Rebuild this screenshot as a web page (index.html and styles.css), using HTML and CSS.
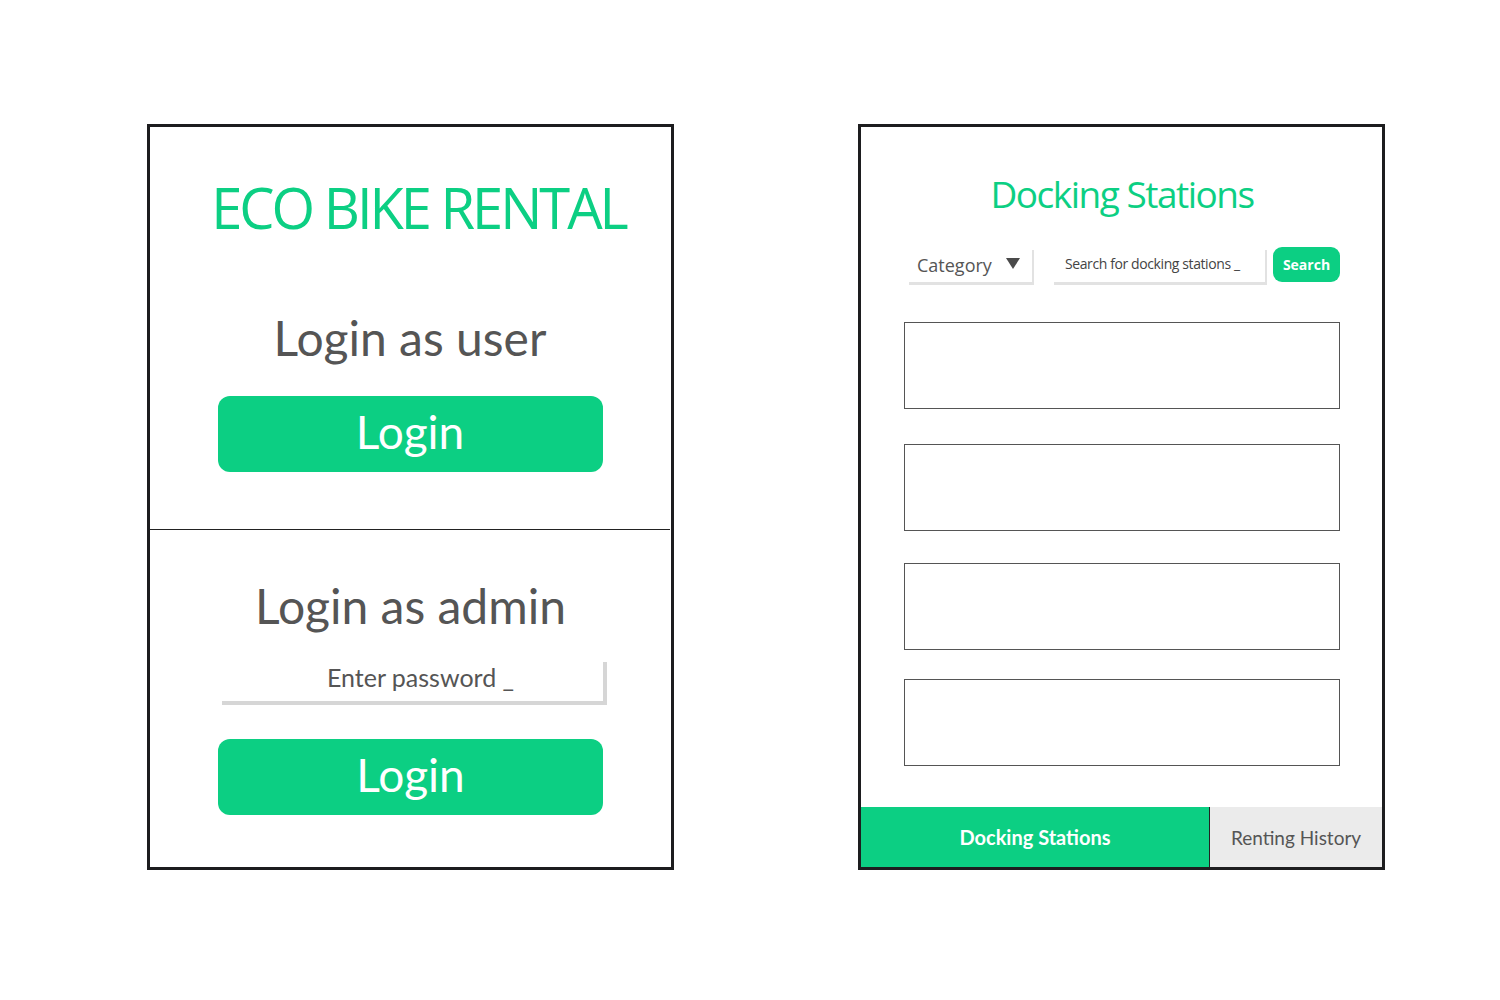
FILE: index.html
```html
<!DOCTYPE html>
<html>
<head>
<meta charset="utf-8">
<link rel="stylesheet" href="styles.css">
</head>
<body>
<div class="stage">
  <section class="panel login-panel">
    <div class="user-section">
      <h1 class="brand">ECO BIKE RENTAL</h1>
      <h2 class="heading user-heading">Login as user</h2>
      <button class="login-btn">Login</button>
    </div>
    <div class="admin-section">
      <h2 class="heading admin-heading">Login as admin</h2>
      <div class="password-field">Enter password _</div>
      <button class="login-btn admin-btn">Login</button>
    </div>
  </section>

  <section class="panel stations-panel">
    <div class="stations-body">
      <h1 class="stations-title">Docking Stations</h1>
      <div class="toolbar">
        <div class="category">
          <span>Category</span>
          <svg class="caret" width="14" height="11" viewBox="0 0 14 11"><polygon points="0,0 14,0 7,11" fill="#4a4a4a"/></svg>
        </div>
        <div class="search-input">Search for docking stations _</div>
        <button class="search-btn">Search</button>
      </div>
      <ul class="station-list">
        <li class="station s1"></li>
        <li class="station s2"></li>
        <li class="station s3"></li>
        <li class="station s4"></li>
      </ul>
    </div>
    <nav class="tabs">
      <div class="tab tab-active">Docking Stations</div>
      <div class="tab tab-idle">Renting History</div>
    </nav>
  </section>
</div>
</body>
</html>
```

FILE: styles.css
```css
* { box-sizing: border-box; }
html, body { margin: 0; padding: 0; background: #ffffff; }
body { width: 1500px; height: 1000px; overflow: hidden; }

.stage {
  display: flex;
  gap: 184px;
  padding: 124px 0 0 147px;
}

.panel {
  width: 527px;
  height: 746px;
  border: 3px solid #1d1d1f;
  display: flex;
  flex-direction: column;
}

/* ---------- left panel ---------- */
.user-section {
  height: 403px;
  border-bottom: 1px solid #222;
  margin-right: 1px;
  display: flex;
  flex-direction: column;
  align-items: center;
  padding-top: 46px;
}

.brand {
  margin: 0 0 0 17px;
  font-family: "Open Sans", sans-serif;
  font-weight: 400;
  font-size: 56px;
  line-height: 68px;
  color: #0ccf83;
  letter-spacing: -3px;
}

.heading {
  margin: 0;
  font-family: "Lato", sans-serif;
  font-weight: 400;
  font-size: 48px;
  line-height: 56px;
  color: #555555;
}
.user-heading { margin-top: 69px; }

.login-btn {
  width: 385px;
  height: 76px;
  border: 0;
  border-radius: 12px;
  background: #0ccf83;
  color: #ffffff;
  font-family: "Lato", sans-serif;
  font-size: 46px;
  line-height: 70px;
  padding: 0 0 4px 0;
  margin-top: 30px;
}

.admin-section {
  display: flex;
  flex-direction: column;
  align-items: center;
  padding-top: 48px;
}

.password-field {
  width: 385px;
  height: 43px;
  margin-top: 28px;
  margin-left: 8px;
  padding-left: 16px;
  border-right: 4px solid #d6d6d6;
  border-bottom: 4px solid #d6d6d6;
  font-family: "Lato", sans-serif;
  font-size: 25px;
  line-height: 30px;
  color: #555555;
  text-align: center;
}

.admin-btn { margin-top: 34px; }

/* ---------- right panel ---------- */
.stations-body {
  flex: 1;
  display: flex;
  flex-direction: column;
  padding: 44px 42px 0 43px;
}

.stations-title {
  margin: 0;
  text-align: center;
  font-family: "Open Sans", sans-serif;
  font-weight: 400;
  font-size: 37px;
  line-height: 46px;
  color: #0ccf83;
  letter-spacing: -1.5px;
}

.toolbar {
  display: flex;
  align-items: flex-start;
  margin-top: 30px;
  padding-left: 3px;
}

.category {
  width: 125px;
  height: 35px;
  display: flex;
  align-items: center;
  justify-content: space-between;
  padding: 0 12px 0 10px;
  box-shadow: 2px 3px 0 #e2e2e2;
  font-family: "Open Sans", sans-serif;
  font-size: 18px;
  color: #555555;
}
.caret { margin-bottom: 3px; }

.search-input {
  width: 213px;
  height: 35px;
  margin-left: 20px;
  padding-left: 13px;
  box-shadow: 2px 3px 0 #e2e2e2;
  font-family: "Open Sans", sans-serif;
  font-size: 14px;
  line-height: 34px;
  letter-spacing: -0.4px;
  color: #444444;
}

.search-btn {
  width: 67px;
  height: 35px;
  margin-left: 8px;
  border: 0;
  border-radius: 9px;
  background: #0ccf83;
  color: #ffffff;
  font-family: "Open Sans", sans-serif;
  font-weight: 700;
  font-size: 14px;
  padding: 0;
}

.station-list {
  list-style: none;
  margin: 40px 0 0 0;
  padding: 0;
}
.station {
  width: 436px;
  height: 87px;
  border: 1px solid #555555;
}
.s2 { margin-top: 35px; }
.s3 { margin-top: 32px; }
.s4 { margin-top: 29px; }

.tabs {
  display: flex;
  height: 60px;
}
.tab {
  display: flex;
  align-items: center;
  justify-content: center;
  font-family: "Lato", sans-serif;
  font-size: 20px;
}
.tab-active {
  width: 349px;
  background: #0ccf83;
  color: #ffffff;
  font-weight: 700;
  border-right: 1px solid #222;
}
.tab-idle {
  flex: 1;
  background: #ebebeb;
  color: #555555;
  font-size: 19px;
}
```
